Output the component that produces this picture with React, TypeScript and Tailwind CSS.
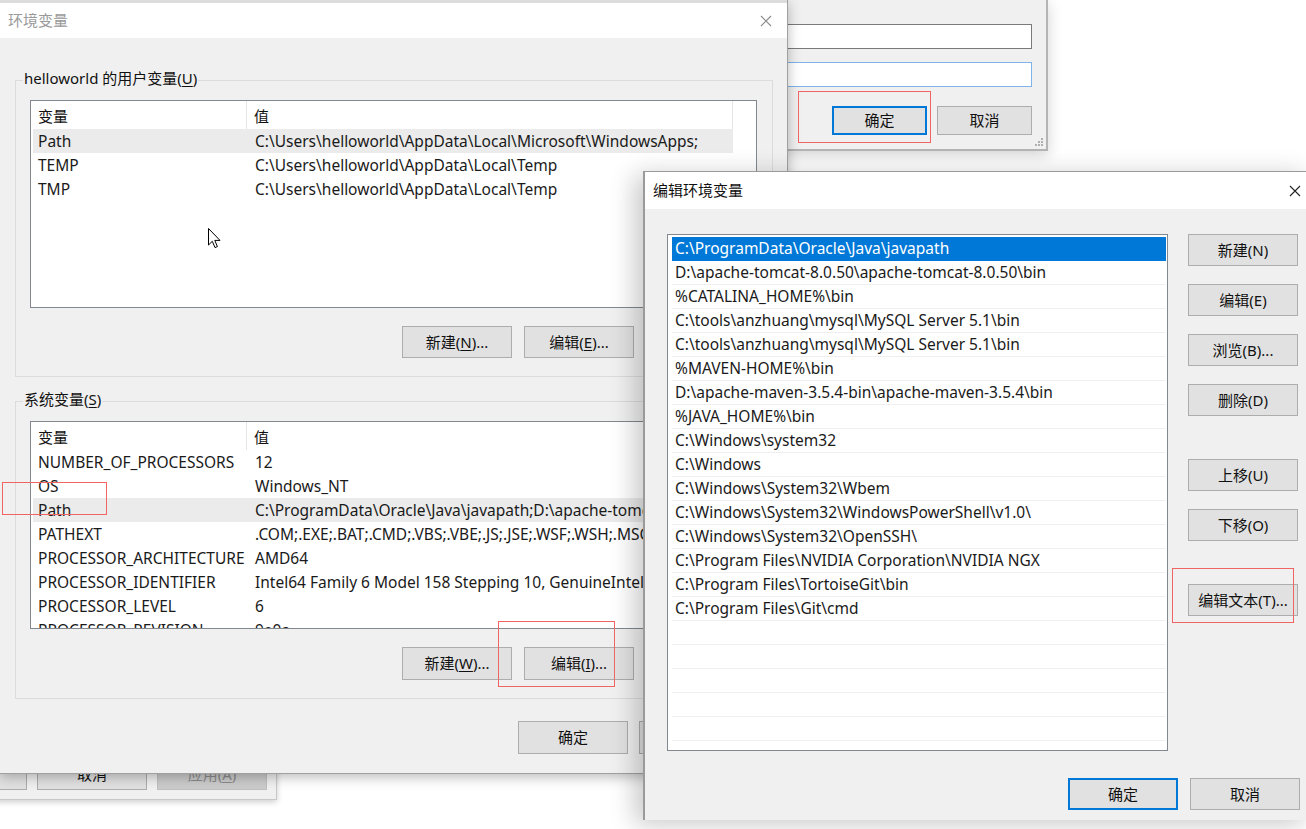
import * as React from 'react'

type BtnProps = {
  children?: React.ReactNode
  className?: string
  primary?: boolean
  disabled?: boolean
}

const Btn: React.FC<BtnProps> = ({ children, className = '', primary, disabled }) => (
  <div
    className={`flex items-center justify-center shrink-0 text-[15px] ${
      primary ? 'border-2 border-[#0078d7]' : 'border border-[#adadad]'
    } ${disabled ? 'bg-[#cccccc] border-[#bfbfbf] text-[#8a8a8a]' : 'bg-[#e1e1e1] text-[#111]'} ${className}`}
  >
    {children}
  </div>
)

const U: React.FC<{ c: string }> = ({ c }) => <span className="underline underline-offset-2">{c}</span>

const CloseX: React.FC<{ color: string }> = ({ color }) => (
  <svg width="12" height="12" viewBox="0 0 12 12">
    <path d="M1 1 L11 11 M11 1 L1 11" stroke={color} strokeWidth="1.1" />
  </svg>
)

type ListViewProps = {
  rows: [string, string][]
  selected: number
  height: string
}

const ListView: React.FC<ListViewProps> = ({ rows, selected, height }) => (
  <div className={`w-[727px] ${height} border border-[#828790] bg-white overflow-hidden`}>
    <div className="flex h-[28px] w-[702px] items-center text-[15px] text-[#111]">
      <div className="w-[216px] h-full flex items-center pl-[7px] pt-[2px] border-r border-[#e5e5e5]">变量</div>
      <div className="flex-1 h-full flex items-center pl-[7px] pt-[2px] border-r border-[#e5e5e5]">值</div>
    </div>
    {rows.map(([k, v], i) => (
      <div
        key={k}
        className={`flex h-[24px] ml-[2px] w-[700px] items-center pt-[2px] text-[15.5px] text-[#1a1a1a] whitespace-nowrap ${
          i === selected ? 'bg-[#ebebeb]' : ''
        }`}
      >
        <div className="w-[214px] pl-[5px] overflow-hidden">{k}</div>
        <div className="flex-1 pl-[8px] overflow-hidden">{v}</div>
      </div>
    ))}
  </div>
)

const userVars: [string, string][] = [
  ['Path', 'C:\\Users\\helloworld\\AppData\\Local\\Microsoft\\WindowsApps;'],
  ['TEMP', 'C:\\Users\\helloworld\\AppData\\Local\\Temp'],
  ['TMP', 'C:\\Users\\helloworld\\AppData\\Local\\Temp'],
]

const sysVars: [string, string][] = [
  ['NUMBER_OF_PROCESSORS', '12'],
  ['OS', 'Windows_NT'],
  ['Path', 'C:\\ProgramData\\Oracle\\Java\\javapath;D:\\apache-tomcat-8.0.50\\apache-tomcat-8.0.50\\bin'],
  ['PATHEXT', '.COM;.EXE;.BAT;.CMD;.VBS;.VBE;.JS;.JSE;.WSF;.WSH;.MSC'],
  ['PROCESSOR_ARCHITECTURE', 'AMD64'],
  ['PROCESSOR_IDENTIFIER', 'Intel64 Family 6 Model 158 Stepping 10, GenuineIntel'],
  ['PROCESSOR_LEVEL', '6'],
  ['PROCESSOR_REVISION', '9e0a'],
]

const paths = [
  'C:\\ProgramData\\Oracle\\Java\\javapath',
  'D:\\apache-tomcat-8.0.50\\apache-tomcat-8.0.50\\bin',
  '%CATALINA_HOME%\\bin',
  'C:\\tools\\anzhuang\\mysql\\MySQL Server 5.1\\bin',
  'C:\\tools\\anzhuang\\mysql\\MySQL Server 5.1\\bin',
  '%MAVEN-HOME%\\bin',
  'D:\\apache-maven-3.5.4-bin\\apache-maven-3.5.4\\bin',
  '%JAVA_HOME%\\bin',
  'C:\\Windows\\system32',
  'C:\\Windows',
  'C:\\Windows\\System32\\Wbem',
  'C:\\Windows\\System32\\WindowsPowerShell\\v1.0\\',
  'C:\\Windows\\System32\\OpenSSH\\',
  'C:\\Program Files\\NVIDIA Corporation\\NVIDIA NGX',
  'C:\\Program Files\\TortoiseGit\\bin',
  'C:\\Program Files\\Git\\cmd',
  '',
  '',
  '',
  '',
  '',
  '',
]

export default function App() {
  return (
    <div className="relative w-[1306px] h-[829px] bg-white overflow-hidden font-['Noto_Sans','Noto_Sans_CJK_SC',sans-serif]">
      {/* window behind, bottom left */}
      <div className="absolute left-[-10px] top-[600px] w-[287px] h-[200px] bg-[#f0f0f0] border border-[#c8c8c8] shadow-[0_2px_6px_rgba(0,0,0,0.2)] flex items-end justify-end gap-[10px] pr-[9px] pb-[9px]">
        <Btn className="w-[110px] h-[32px]" />
        <Btn className="w-[110px] h-[32px]">取消</Btn>
        <Btn disabled className="w-[110px] h-[32px]">
          应用(<U c="A" />)
        </Btn>
      </div>

      {/* window behind, top right */}
      <div className="absolute left-[700px] top-0 w-[348px] h-[151px] bg-[#f0f0f0] border-r-2 border-b-2 border-[#b4b4b4] shadow-[0_4px_14px_rgba(0,0,0,0.18)] flex flex-col items-end pr-[14px]">
        <div className="mt-[24px] h-[25px] w-[320px] bg-white border border-[#7a7a7a]" />
        <div className="mt-[13px] h-[25px] w-[320px] bg-white border border-[#7eb4ea]" />
        <div className="mt-[19px] flex gap-[10px]">
          <Btn primary className="w-[95px] h-[29px] text-[14px]">确定</Btn>
          <Btn className="w-[95px] h-[29px] text-[14px]">取消</Btn>
        </div>
        <svg className="absolute right-[2px] bottom-[2px]" width="10" height="10" viewBox="0 0 10 10">
          <g fill="#b0b0b0">
            <rect x="7" y="1" width="2" height="2" />
            <rect x="4" y="4" width="2" height="2" />
            <rect x="7" y="4" width="2" height="2" />
            <rect x="1" y="7" width="2" height="2" />
            <rect x="4" y="7" width="2" height="2" />
            <rect x="7" y="7" width="2" height="2" />
          </g>
        </svg>
      </div>

      {/* 环境变量 main window */}
      <div className="absolute left-0 top-0 w-[788px] h-[774px] bg-[#f0f0f0] border-r border-b border-[#a0a0a0] shadow-[0_3px_12px_rgba(0,0,0,0.28)] flex flex-col">
        <div className="h-[3px] bg-[#dcdcdc] shrink-0" />
        <div className="h-[35px] bg-white flex items-center justify-between pl-[8px] pr-[15px] shrink-0">
          <span className="text-[15px] text-[#9a9a9a]">环境变量</span>
          <CloseX color="#8a8a8a" />
        </div>

        {/* user variables */}
        <div className="relative mt-[42px] ml-[15px] w-[758px] border border-[#dcdcdc] pt-[19px] pl-[14px] pb-[18px] flex flex-col">
          <span className="absolute left-[7px] top-[-14px] bg-[#f0f0f0] px-[1px] text-[15px] text-[#111] leading-[22px]">
            helloworld 的用户变量(<U c="U" />)
          </span>
          <ListView rows={userVars} selected={0} height="h-[208px]" />
          <div className="mt-[18px] flex gap-[12px] justify-end pr-[16px]">
            <Btn className="w-[110px] h-[32px]">
              新建(<U c="N" />)...
            </Btn>
            <Btn className="w-[110px] h-[32px]">
              编辑(<U c="E" />)...
            </Btn>
            <Btn className="w-[110px] h-[32px]" />
          </div>
        </div>

        {/* system variables */}
        <div className="relative mt-[24px] ml-[15px] w-[758px] border border-[#dcdcdc] pt-[19px] pl-[14px] pb-[18px] flex flex-col">
          <span className="absolute left-[7px] top-[-14px] bg-[#f0f0f0] px-[1px] text-[15px] text-[#111] leading-[22px]">
            系统变量(<U c="S" />)
          </span>
          <ListView rows={sysVars} selected={2} height="h-[208px]" />
          <div className="mt-[18px] flex gap-[12px] justify-end pr-[16px]">
            <Btn className="w-[110px] h-[33px]">
              新建(<U c="W" />)...
            </Btn>
            <Btn className="w-[110px] h-[33px]">
              编辑(<U c="I" />)...
            </Btn>
            <Btn className="w-[110px] h-[33px]" />
          </div>
        </div>

        <div className="mt-[22px] flex gap-[11px] justify-end pr-[38px]">
          <Btn className="w-[110px] h-[33px]">确定</Btn>
          <Btn className="w-[110px] h-[33px]" />
        </div>
      </div>

      {/* 编辑环境变量 dialog */}
      <div className="absolute left-[643px] top-[171px] w-[668px] h-[649px] bg-[#f0f0f0] border-l-2 border-t border-[#9a9a9a] shadow-[-8px_4px_24px_rgba(0,0,0,0.22)] flex flex-col">
        <div className="h-[37px] bg-white flex items-center justify-between pl-[8px] pr-[10px] shrink-0">
          <span className="text-[15px] text-[#111]">编辑环境变量</span>
          <CloseX color="#222" />
        </div>
        <div className="flex pl-[22px] pt-[25px]">
          <div className="w-[501px] h-[517px] bg-white border border-[#828790] pl-[4px] pr-[1px] pt-[2px] overflow-hidden">
            {paths.map((p, i) => (
              <div
                key={i}
                className={`h-[24px] flex items-center pl-[3px] text-[15.5px] whitespace-nowrap border-b ${
                  i === 0 ? 'bg-[#0078d7] text-white border-[#0078d7]' : 'text-[#1a1a1a] border-[#efefef]'
                }`}
              >
                {p}
              </div>
            ))}
          </div>
          <div className="ml-[20px] flex flex-col gap-[18px]">
            <Btn className="w-[110px] h-[32px]">新建(N)</Btn>
            <Btn className="w-[110px] h-[32px]">编辑(E)</Btn>
            <Btn className="w-[110px] h-[32px]">浏览(B)...</Btn>
            <Btn className="w-[110px] h-[32px]">删除(D)</Btn>
            <Btn className="w-[110px] h-[32px] mt-[25px]">上移(U)</Btn>
            <Btn className="w-[110px] h-[32px]">下移(O)</Btn>
            <Btn className="w-[110px] h-[32px] mt-[25px]">编辑文本(T)...</Btn>
          </div>
        </div>
        <div className="mt-[27px] flex gap-[12px] justify-end pr-[11px]">
          <Btn primary className="w-[110px] h-[32px]">确定</Btn>
          <Btn className="w-[110px] h-[32px]">取消</Btn>
        </div>
      </div>

      {/* mouse cursor */}
      <svg className="absolute left-[208px] top-[228px]" width="14" height="22" viewBox="0 0 14 22">
        <path d="M0.5 0.5 L0.5 17 L4.3 13.3 L7 19.6 L9.4 18.6 L6.8 12.4 L12 12.4 Z" fill="#fff" stroke="#000" strokeWidth="1" />
      </svg>

      {/* red annotation boxes */}
      <div className="absolute left-[798px] top-[91px] w-[133px] h-[52px] border-[1.5px] border-[#f06464]" />
      <div className="absolute left-[2px] top-[482px] w-[105px] h-[33px] border-[1.5px] border-[#f06464]" />
      <div className="absolute left-[498px] top-[621px] w-[117px] h-[66px] border-[1.5px] border-[#f06464]" />
      <div className="absolute left-[1172px] top-[568px] w-[122px] h-[55px] border-[1.5px] border-[#f06464]" />
    </div>
  )
}
